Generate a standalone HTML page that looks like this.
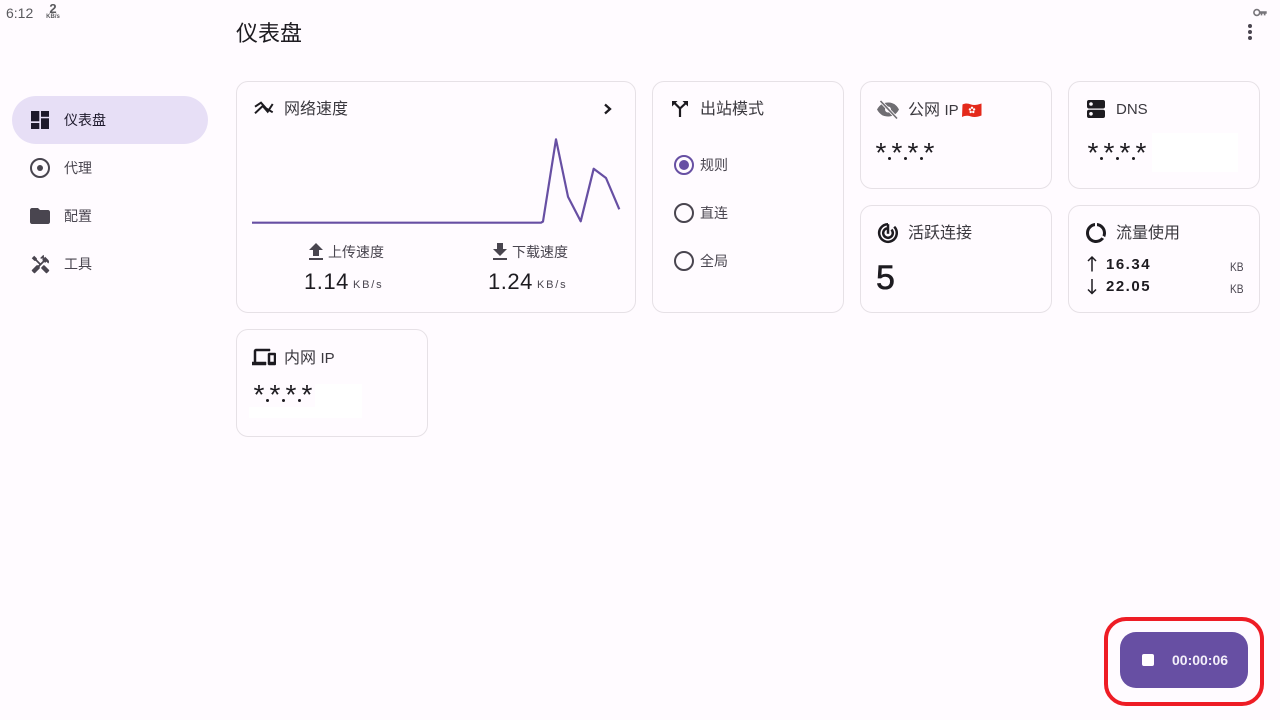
<!DOCTYPE html>
<html lang="zh"><head><meta charset="utf-8"><title>仪表盘</title>
<style>
*{box-sizing:border-box;margin:0;padding:0}
html,body{width:1280px;height:720px;overflow:hidden;background:#fffbff}
body{position:relative;font-family:"Liberation Sans","Noto Sans CJK SC",sans-serif;color:#1d1b20}
.a{position:absolute;white-space:nowrap}
.card{position:absolute;border:1px solid #e6e1e6;border-radius:12px;background:#fffbff}
.t16{font-size:16px;line-height:22px;color:#3a383e}
.t16 b{font-weight:400;font-size:15px}
.t14{font-size:14px;line-height:20px;color:#49454f}
svg{position:absolute;display:block}
.star{position:absolute;font-size:28px;line-height:30px;width:8px;display:flex;justify-content:center;color:#1d1b20}
.dot{position:absolute;width:3px;height:3px;border-radius:50%;background:#1d1b20}
.kb{font-size:12px;line-height:16px;color:#49454f;transform:scaleX(.85);transform-origin:left center}
</style></head><body>

<div class="a" style="left:6px;top:4px;font-size:14px;line-height:18px;color:#5a5a5e">6:12</div>
<div class="a" style="left:45px;top:2px;width:16px;text-align:center;font-size:13px;line-height:13px;font-weight:700;color:#5a5a5e">2</div>
<div class="a" style="left:43px;top:14px;width:20px;text-align:center;font-size:6px;line-height:7px;font-weight:700;color:#5a5a5e">KB/s</div>
<svg style="left:1253px;top:8px" width="14" height="9" viewBox="0 0 14 9"><circle cx="3.8" cy="4.500" r="2.900" fill="none" stroke="#77757a" stroke-width="1.600"/><path d="M6.200 3.200h7.500v2.600h-1.200v1.600h-1.700V5.800H9.300v1.600H7.700V5.800H6.200z" fill="#77757a"/></svg>
<svg style="left:1238px;top:20px" width="24" height="24" viewBox="0 0 24 24"><circle cx="12" cy="6" r="2" fill="#49454f"/><circle cx="12" cy="12" r="2" fill="#49454f"/><circle cx="12" cy="18" r="2" fill="#49454f"/></svg>

<div class="a" style="left:236px;top:18px;font-size:22px;line-height:32px;color:#1d1b20">仪表盘</div>

<div class="a" style="left:12px;top:96px;width:196px;height:48px;border-radius:24px;background:#e7dff6"></div>
<svg style="left:28px;top:108px" width="24" height="24" viewBox="0 0 24 24"><g fill="#1d192b"><rect x="3" y="3" width="8.300" height="10.300"/><rect x="3" y="15" width="8.300" height="6"/><rect x="13" y="3" width="8" height="5.800"/><rect x="13" y="10.300" width="8" height="10.700"/></g></svg>
<div class="a" style="left:64px;top:110px;font-size:14px;line-height:20px;color:#1d192b">仪表盘</div>
<svg style="left:28px;top:156px" width="24" height="24" viewBox="0 0 24 24"><circle cx="12" cy="12" r="9" fill="none" stroke="#49454f" stroke-width="2"/><circle cx="12" cy="12" r="3" fill="#49454f"/></svg>
<div class="a t14" style="left:64px;top:158px">代理</div>
<svg style="left:28px;top:204px" width="24" height="24" viewBox="0 0 24 24"><path fill="#49454f" d="M10 4H4c-1.100 0-1.990.900-1.990 2L2 18c0 1.100.900 2 2 2h16c1.100 0 2-.900 2-2V8c0-1.100-.900-2-2-2h-8l-2-2z"/></svg>
<div class="a t14" style="left:64px;top:206px">配置</div>
<svg style="left:29.500px;top:253.500px" width="21" height="21" viewBox="0 0 24 24"><path fill="#49454f" d="M21.670 18.170l-5.300-5.300h-.990l-2.540 2.540v.990l5.300 5.300c.390.390 1.020.390 1.410 0l2.120-2.120c.390-.380.390-1.020 0-1.410zM17.340 10.190l1.410-1.410 2.120 2.120c1.170-1.170 1.170-3.070 0-4.240l-3.540-3.540-1.410 1.410V1.710l-.700-.710-3.540 3.540.710.710h2.830l-1.410 1.410 1.060 1.060-2.890 2.890-4.130-4.130V5.060L4.830 2.040 2 4.870 5.030 7.900h1.410l4.130 4.130-.850.850H7.600l-5.300 5.300c-.390.390-.390 1.020 0 1.410l2.120 2.120c.390.390 1.020.390 1.410 0l5.300-5.300v-2.120l5.150-5.150 1.060 1.050z"/></svg>
<div class="a t14" style="left:64px;top:254px">工具</div>

<!-- speed card -->
<div class="card" style="left:236px;top:81px;width:400px;height:232px"></div>
<svg style="left:252px;top:98px" width="24" height="20" viewBox="0 0 24 20"><path d="M3 15.300L10.700 8l5 5.700L20.700 6M3 8.700L9 4.700l5 5.600 6.700 4" fill="none" stroke="#1d1b20" stroke-width="2"/></svg>
<div class="a t16" style="left:284px;top:99px">网络速度</div>
<svg style="left:596px;top:97px" width="24" height="24" viewBox="0 0 24 24"><path d="M9 7.500L14 12l-5 4.500" fill="none" stroke="#1d1b20" stroke-width="2.300"/></svg>
<svg style="left:0;top:0" width="1280" height="320"><polyline fill="none" stroke="#674fa3" stroke-width="2.200" stroke-linejoin="round" points="252,222.700 541,222.700 543,221.500 556,139.300 568,196.700 580.700,221.300 593.700,168.700 606,178 619.300,209.300"/></svg>
<svg style="left:304px;top:240px" width="24" height="24" viewBox="0 0 24 24"><path fill="#49454f" d="M9 16h6v-6h4l-7-7-7 7h4v6zm-4 2h14v2H5v-2z"/></svg>
<div class="a t14" style="left:328px;top:242px">上传速度</div>
<svg style="left:488px;top:240px" width="24" height="24" viewBox="0 0 24 24"><path fill="#49454f" d="M19 9h-4V3H9v6H5l7 7 7-7zM5 18v2h14v-2H5z"/></svg>
<div class="a t14" style="left:512px;top:242px">下载速度</div>
<div class="a" style="left:304px;top:268px;font-size:22px;line-height:28px;letter-spacing:.5px;color:#1d1b20">1.14</div>
<div class="a" style="left:353px;top:278px;font-size:11px;line-height:14px;letter-spacing:1.800px;color:#49454f">KB/s</div>
<div class="a" style="left:488px;top:268px;font-size:22px;line-height:28px;letter-spacing:.5px;color:#1d1b20">1.24</div>
<div class="a" style="left:537px;top:278px;font-size:11px;line-height:14px;letter-spacing:1.800px;color:#49454f">KB/s</div>

<!-- mode card -->
<div class="card" style="left:652px;top:81px;width:192px;height:232px"></div>
<svg style="left:668px;top:97px" width="24" height="24" viewBox="0 0 24 24"><path d="M12 20v-8.500L5.500 5M12 11.500L19 5" fill="none" stroke="#1d1b20" stroke-width="2.200"/><path d="M4 4h5.500L4 9.500zM20 4h-5.500L20 9.500z" fill="#1d1b20"/></svg>
<div class="a t16" style="left:700px;top:99px">出站模式</div>
<svg style="left:672px;top:153px" width="24" height="24" viewBox="0 0 24 24"><circle cx="12" cy="12" r="9" fill="none" stroke="#674fa3" stroke-width="2"/><circle cx="12" cy="12" r="5" fill="#674fa3"/></svg>
<div class="a t14" style="left:700px;top:155px">规则</div>
<svg style="left:672px;top:201px" width="24" height="24" viewBox="0 0 24 24"><circle cx="12" cy="12" r="9" fill="none" stroke="#49454f" stroke-width="2"/></svg>
<div class="a t14" style="left:700px;top:203px">直连</div>
<svg style="left:672px;top:249px" width="24" height="24" viewBox="0 0 24 24"><circle cx="12" cy="12" r="9" fill="none" stroke="#49454f" stroke-width="2"/></svg>
<div class="a t14" style="left:700px;top:251px">全局</div>

<!-- public ip -->
<div class="card" style="left:860px;top:81px;width:192px;height:108px"></div>
<svg style="left:876px;top:97px" width="24" height="24" viewBox="0 0 24 24"><path fill="#6f6d72" d="M1 12.500C4 7 8 5.500 12 5.500S20 7 23 12.500C20 18 16 19.500 12 19.500S4 18 1 12.500z"/><circle cx="12" cy="12.500" r="3" fill="#fffbff"/><path d="M4.500 4L21 21.500" stroke="#fffbff" stroke-width="3.200"/><path d="M4.500 4L21 21.500" stroke="#6f6d72" stroke-width="1.600"/></svg>
<div class="a t16" style="left:908px;top:100px">公网 <b>IP</b></div>
<svg style="left:962px;top:102px" width="20" height="17" viewBox="0 0 20 17"><path d="M.500 2.500C4 1 6 1.500 9 2.500s6 .500 10.500-1v12c-4 1.500-7 2-10.500 1s-5.500-1-9 .500z" fill="#e4291b"/><g fill="#fff"><circle cx="10" cy="5.800" r="1.200"/><circle cx="12.100" cy="7.400" r="1.200"/><circle cx="11.300" cy="10" r="1.200"/><circle cx="8.700" cy="10" r="1.200"/><circle cx="7.900" cy="7.400" r="1.200"/></g></svg>
<span class="star" style="left:877px;top:138px">*</span><span class="dot" style="left:887.500px;top:157px"></span><span class="star" style="left:893px;top:138px">*</span><span class="dot" style="left:903.500px;top:157px"></span><span class="star" style="left:909px;top:138px">*</span><span class="dot" style="left:919.500px;top:157px"></span><span class="star" style="left:925px;top:138px">*</span>

<!-- dns -->
<div class="card" style="left:1068px;top:81px;width:192px;height:108px"></div>
<div class="a" style="left:1152px;top:133px;width:86px;height:39px;background:#fff"></div>
<svg style="left:1084px;top:97px" width="24" height="24" viewBox="0 0 24 24"><path fill="#1d1b20" fill-rule="evenodd" d="M5 3h14a2 2 0 0 1 2 2v4.500a2 2 0 0 1-2 2H5a2 2 0 0 1-2-2V5a2 2 0 0 1 2-2zm2 2.200a1.800 1.800 0 1 0 0 3.600 1.800 1.800 0 0 0 0-3.600zM5 12.800h14a2 2 0 0 1 2 2V19a2 2 0 0 1-2 2H5a2 2 0 0 1-2-2v-4.200a2 2 0 0 1 2-2zm2 2.200a1.800 1.800 0 1 0 0 3.600 1.800 1.800 0 0 0 0-3.600z"/></svg>
<div class="a t16" style="left:1116px;top:99px"><b>DNS</b></div>
<span class="star" style="left:1089px;top:138px">*</span><span class="dot" style="left:1099.500px;top:157px"></span><span class="star" style="left:1105px;top:138px">*</span><span class="dot" style="left:1115.500px;top:157px"></span><span class="star" style="left:1121px;top:138px">*</span><span class="dot" style="left:1131.500px;top:157px"></span><span class="star" style="left:1137px;top:138px">*</span>

<!-- active -->
<div class="card" style="left:860px;top:205px;width:192px;height:108px"></div>
<svg style="left:876px;top:221px" width="24" height="24" viewBox="0 0 24 24"><g fill="none" stroke="#1d1b20" stroke-width="2.500"><path d="M12 3.200A8.800 8.800 0 1 0 18.200 5.800"/><path d="M11 7.300A4.800 4.800 0 1 0 15.400 8.600"/><path d="M12 12.800V3.200"/></g></svg>
<div class="a t16" style="left:908px;top:223px">活跃连接</div>
<div class="a" style="left:876px;top:258px;font-size:34px;line-height:40px;color:#1d1b20;-webkit-text-stroke:.6px #1d1b20">5</div>

<!-- traffic -->
<div class="card" style="left:1068px;top:205px;width:192px;height:108px"></div>
<svg style="left:1084px;top:221px" width="24" height="24" viewBox="0 0 24 24"><path fill="#1d1b20" d="M13 2.050v3.030c3.390.490 6 3.390 6 6.920 0 .900-.180 1.750-.480 2.540l2.600 1.530c.560-1.240.880-2.620.880-4.070 0-5.180-3.950-9.450-9-9.950zM12 19c-3.870 0-7-3.130-7-7 0-3.530 2.610-6.430 6-6.920V2.050c-5.060.500-9 4.760-9 9.950 0 5.520 4.470 10 9.990 10 3.310 0 6.240-1.610 8.060-4.090l-2.600-1.530C16.170 17.980 14.210 19 12 19z"/></svg>
<div class="a t16" style="left:1116px;top:223px">流量使用</div>
<svg style="left:1084px;top:255px" width="16" height="18" viewBox="0 0 16 18"><path d="M8 16.500V2M4 6l4-4 4 4" fill="none" stroke="#1d1b20" stroke-width="1.500"/></svg>
<svg style="left:1084px;top:277px" width="16" height="18" viewBox="0 0 16 18"><path d="M8 2v14.500M4 12.500l4 4 4-4" fill="none" stroke="#1d1b20" stroke-width="1.500"/></svg>
<div class="a" style="left:1106px;top:255px;font-size:15px;line-height:20px;font-weight:700;letter-spacing:1.500px;color:#1d1b20">16.34</div>
<div class="a" style="left:1106px;top:277px;font-size:15px;line-height:20px;font-weight:700;letter-spacing:1.500px;color:#1d1b20">22.05</div>
<div class="a kb" style="left:1230px;top:259px">KB</div>
<div class="a kb" style="left:1230px;top:281px">KB</div>

<!-- internal -->
<div class="card" style="left:236px;top:329px;width:192px;height:108px"></div>
<div class="a" style="left:315px;top:384px;width:47px;height:34px;background:#fff"></div>
<div class="a" style="left:249px;top:407px;width:66px;height:11px;background:#fff"></div>
<svg style="left:252px;top:345px" width="24" height="24" viewBox="0 0 24 24"><path fill="#1d1b20" stroke="#1d1b20" stroke-width=".5" d="M4 6h14V4H4c-1.100 0-2 .900-2 2v11H0v3h14v-3H4V6zm19 2h-6c-.550 0-1 .450-1 1v10c0 .550.450 1 1 1h6c.550 0 1-.450 1-1V9c0-.550-.450-1-1-1zm-1 9h-4v-7h4v7z"/></svg>
<div class="a t16" style="left:284px;top:348px">内网 <b>IP</b></div>
<span class="star" style="left:255px;top:380px">*</span><span class="dot" style="left:265.500px;top:399px"></span><span class="star" style="left:271px;top:380px">*</span><span class="dot" style="left:281.500px;top:399px"></span><span class="star" style="left:287px;top:380px">*</span><span class="dot" style="left:297.500px;top:399px"></span><span class="star" style="left:303px;top:380px">*</span>

<!-- fab -->
<div class="a" style="left:1120px;top:632px;width:128px;height:56px;border-radius:16px;background:#674fa3"></div>
<div class="a" style="left:1142px;top:654px;width:12px;height:12px;border-radius:2px;background:#fff"></div>
<div class="a" style="left:1172px;top:652px;font-size:14px;line-height:16px;font-weight:700;color:#f3effa">00:00:06</div>
<div class="a" style="left:1104px;top:617px;width:160px;height:89px;border:4px solid #ee1c25;border-radius:22px"></div>
</body></html>
